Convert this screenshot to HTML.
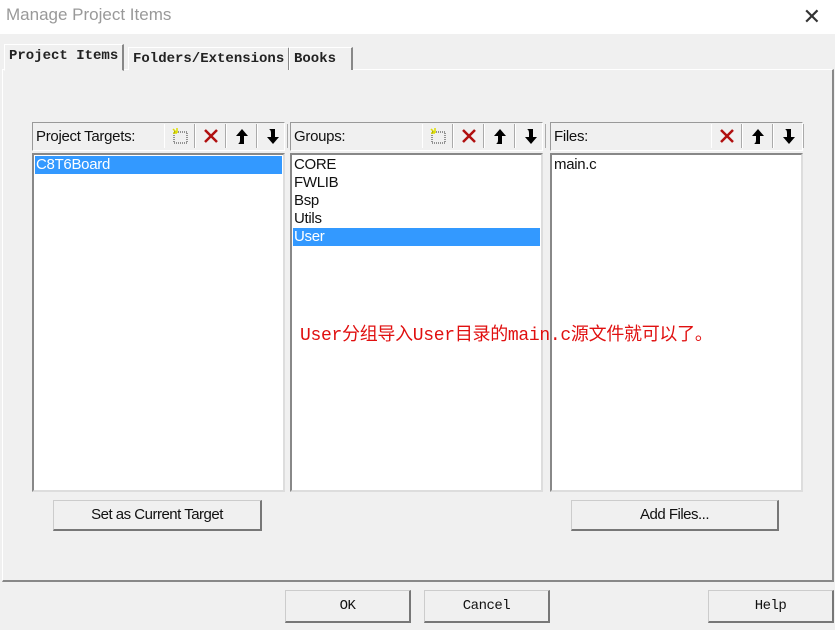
<!DOCTYPE html><html><head><style>
body{margin:0;width:835px;height:630px;background:#f0f0f0;position:relative;overflow:hidden;font-family:"Liberation Sans",sans-serif;}
.a{position:absolute;box-sizing:border-box}
.title{left:0;top:0;width:835px;height:34px;background:#fff;font-size:17px;color:#999;padding:5px 0 0 6px}
.tab{font-family:"Liberation Mono",monospace;font-size:14px;font-weight:bold;color:#222;border:1px solid #fff;border-right:2px solid #888;border-bottom:none;background:#f0f0f0;padding:3px 4px}
.hdr{border:1px solid #aaa;border-top-color:#999;border-left-color:#999;border-right-color:#fff;border-bottom-color:#fff;font-size:15px;color:#111;padding:5px 0 0 3px;letter-spacing:-.3px}
.list{background:#fff;border:2px solid;border-color:#888 #ddd #ddd #888;font-size:15px;color:#111;padding:1px 1px}
.list div{height:18px;line-height:18px;padding-left:1px;letter-spacing:-.3px}
.sel{background:#3399ff;color:#fff}
.btn{border:1px solid #ccc;border-right:2px solid #777;border-bottom:2px solid #777;background:#f0f0f0;font-size:15px;text-align:center;color:#111;letter-spacing:-.5px}
.mono{font-family:"Liberation Mono",monospace;font-size:14px}
.ib{width:29px;height:24px;border-left:1px solid #fff;border-right:1px solid #aaa;display:flex;align-items:center;justify-content:center}
</style></head><body>
<div class="a title">Manage Project Items</div>
<div class="a" style="right:14px;top:4px;font-size:22px;color:#333">✕</div>
<div class="a" style="left:2px;top:69px;width:832px;height:513px;border:1px solid #fff;border-right:2px solid #888;border-bottom:2px solid #888"></div>
<div class="a tab" style="left:4px;top:44px;height:27px;border-bottom:1px solid #f0f0f0">Project Items</div>
<div class="a tab" style="left:128px;top:47px;height:23px">Folders/Extensions</div>
<div class="a tab" style="left:289px;top:47px;height:23px;width:64px">Books</div>

<svg width="0" height="0" style="position:absolute"><defs>
<g id="nw"><rect x="3" y="5" width="13" height="11" fill="none" stroke="#333" stroke-dasharray="1,1"/><path d="M2 2l4 4M6 1v5M2 6h4" stroke="#dd0" stroke-width="1.5"/></g>
<g id="x"><path d="M3 3l12 12M15 3L3 15" stroke="#b01010" stroke-width="2.5"/></g>
<g id="up"><path d="M9 2L3 9h4v4q0 3 -2 4h6v-8h4z" fill="#000"/></g>
<g id="dn"><path d="M9 17L3 10h4V6q0-3 -2-4h6v8h4z" fill="#000"/></g>
</defs></svg>

<div class="a hdr" style="left:32px;top:122px;width:253px;height:29px">Project Targets:</div>
<div class="a" style="left:164px;top:124px;display:flex"><div class="ib"><svg width="18" height="18"><use href="#nw"/></svg></div><div class="ib"><svg width="18" height="18"><use href="#x"/></svg></div><div class="ib"><svg width="18" height="18"><use href="#up"/></svg></div><div class="ib"><svg width="18" height="18"><use href="#dn"/></svg></div></div>
<div class="a list" style="left:32px;top:153px;width:253px;height:339px"><div class="sel">C8T6Board</div></div>

<div class="a hdr" style="left:290px;top:122px;width:253px;height:29px">Groups:</div>
<div class="a" style="left:422px;top:124px;display:flex"><div class="ib"><svg width="18" height="18"><use href="#nw"/></svg></div><div class="ib"><svg width="18" height="18"><use href="#x"/></svg></div><div class="ib"><svg width="18" height="18"><use href="#up"/></svg></div><div class="ib"><svg width="18" height="18"><use href="#dn"/></svg></div></div>
<div class="a list" style="left:290px;top:153px;width:253px;height:339px"><div>CORE</div><div>FWLIB</div><div>Bsp</div><div>Utils</div><div class="sel">User</div></div>

<div class="a hdr" style="left:550px;top:122px;width:253px;height:29px">Files:</div>
<div class="a" style="left:711px;top:124px;display:flex"><div class="ib"><svg width="18" height="18"><use href="#x"/></svg></div><div class="ib"><svg width="18" height="18"><use href="#up"/></svg></div><div class="ib"><svg width="18" height="18"><use href="#dn"/></svg></div></div>
<div class="a list" style="left:550px;top:153px;width:253px;height:339px"><div>main.c</div></div>

<div class="a" style="left:300px;top:320px;font-family:'Liberation Mono','Noto Sans CJK SC',monospace;font-size:18px;letter-spacing:-.3px;color:#e01010">User分组导入User目录的main.c源文件就可以了。</div>

<div class="a btn" style="left:53px;top:500px;width:209px;height:31px;line-height:28px">Set as Current Target</div>
<div class="a btn" style="left:571px;top:500px;width:208px;height:31px;line-height:28px">Add Files...</div>
<div class="a btn mono" style="left:285px;top:590px;width:126px;height:33px;line-height:30px">OK</div>
<div class="a btn mono" style="left:424px;top:590px;width:126px;height:33px;line-height:30px">Cancel</div>
<div class="a btn mono" style="left:708px;top:590px;width:126px;height:33px;line-height:30px">Help</div>
</body></html>
